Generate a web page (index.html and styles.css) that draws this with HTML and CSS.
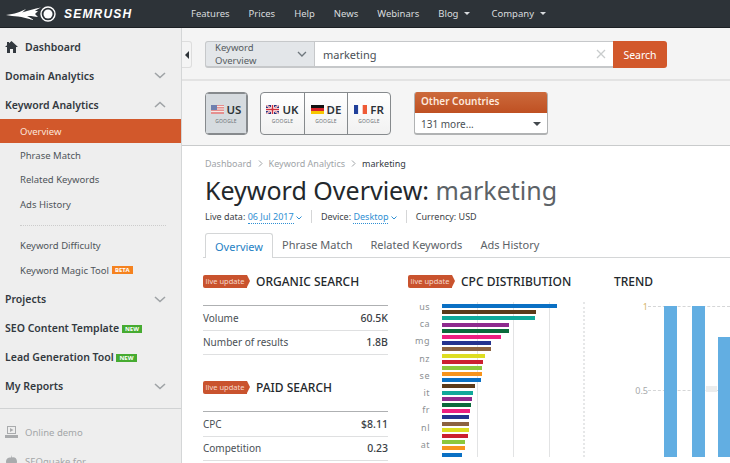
FILE: index.html
```html
<!DOCTYPE html>
<html lang="en">
<head>
    <meta charset="UTF-8">
    <meta name="viewport" content="width=device-width, initial-scale=1.0">
    <title>Keyword Overview: marketing</title>
    <link rel="stylesheet" href="styles.css">
</head>
<body>
    <header class="topbar">
        <a class="logo" href="#">
            <svg width="53" height="16" viewBox="0 0 53 16">
                <path d="M1 9 C10 8 15 6 21 3 C19 5 18 6 17 6.500 C24 4 29 3 36 1.500 C33 3 31 4 30 5 L33 5 L30 8 L33 11 C27 10 24 10 22 10 C24 11 26 12 29 14 C23 13 17 11 13 10.500 C9 10 5 10 1 9 Z" fill="#fff"/>
                <circle cx="43" cy="8" r="7" fill="none" stroke="#fff" stroke-width="1.400"/>
                <circle cx="43" cy="8" r="4.500" fill="#fff"/>
            </svg>
            <span class="logo-text">SEMRUSH</span>
        </a>
        <nav class="topnav">
            <a href="#">Features</a>
            <a href="#">Prices</a>
            <a href="#">Help</a>
            <a href="#">News</a>
            <a href="#">Webinars</a>
            <a href="#" class="has-caret">Blog</a>
            <a href="#" class="has-caret">Company</a>
        </nav>
    </header>

    <div class="app">
        <aside class="sidebar">
            <a class="side-main side-dash" href="#">
                <svg class="home" width="13" height="12" viewBox="0 0 13 12"><path d="M6.500 0 L13 6 L11 6 L11 12 L8 12 L8 8 L5 8 L5 12 L2 12 L2 6 L0 6 L2 4.200 L2 1 L4 1 L4 2.300 Z" fill="#33393f"/></svg>
                Dashboard
            </a>
            <a class="side-main" href="#">Domain Analytics <svg class="chev" width="12" height="7" viewBox="0 0 12 7"><path d="M1 1 L6 5.500 L11 1" /></svg></a>
            <a class="side-main side-open" href="#">Keyword Analytics <svg class="chev" width="12" height="7" viewBox="0 0 12 7"><path d="M1 6 L6 1.500 L11 6" /></svg></a>
            <a class="side-sub active" href="#">Overview</a>
            <a class="side-sub" href="#">Phrase Match</a>
            <a class="side-sub" href="#">Related Keywords</a>
            <a class="side-sub" href="#">Ads History</a>
            <div class="side-divider"></div>
            <a class="side-sub" href="#">Keyword Difficulty</a>
            <a class="side-sub" href="#">Keyword Magic Tool <span class="tag tag-beta">BETA</span></a>
            <a class="side-main side-after" href="#">Projects <svg class="chev" width="12" height="7" viewBox="0 0 12 7"><path d="M1 1 L6 5.500 L11 1" /></svg></a>
            <a class="side-main" href="#"><span>SEO Content Template <span class="tag tag-new">NEW</span></span></a>
            <a class="side-main" href="#"><span>Lead Generation Tool <span class="tag tag-new">NEW</span></span></a>
            <a class="side-main" href="#">My Reports <svg class="chev" width="12" height="7" viewBox="0 0 12 7"><path d="M1 1 L6 5.500 L11 1" /></svg></a>
            <div class="side-bottom">
                <a class="side-extra" href="#">
                    <svg width="13" height="12" viewBox="0 0 13 12"><path d="M2 0 H11 V8 H2 Z M3 1 V7 H10 V1 Z" fill="#a9abad"/><path d="M5 2 L8.500 4 L5 6 Z" fill="#a9abad"/><path d="M0 9 H13 V12 H0 Z" fill="#a9abad"/></svg>
                    Online demo
                </a>
                <a class="side-extra" href="#">
                    <svg width="13" height="12" viewBox="0 0 13 12"><path d="M7 0 L7 2.500 C9 1.500 12 3 12 6.500 C12 9.500 10 12 8.500 12 L4.500 12 C3 12 1 9.500 1 6.500 C1 4 3 2.500 5 2.500 C5.500 2.500 6 2.700 6 2.700 Z" fill="#a9abad"/></svg>
                    SEOquake for
                </a>
            </div>
        </aside>

        <main class="main">
            <a class="collapse" href="#"><span class="collapse-arrow"></span></a>

            <section class="search-band">
                <form class="search">
                    <div class="search-type">Keyword Overview <svg width="10" height="6" viewBox="0 0 10 6"><path d="M1 1 L5 5 L9 1" fill="none" stroke="#6f777d" stroke-width="1.300"/></svg></div>
                    <div class="search-input">
                        <span>marketing</span>
                        <svg width="10" height="10" viewBox="0 0 10 10"><path d="M1 1 L9 9 M9 1 L1 9" stroke="#c9cccd" stroke-width="1.300"/></svg>
                    </div>
                    <button class="search-btn" type="button">Search</button>
                </form>
            </section>

            <section class="country-band">
                <div class="db-group">
                    <a class="db db-selected" href="#">
                        <span class="db-top">
                            <svg class="flag" width="13" height="9" viewBox="0 0 13 9"><rect width="13" height="9" fill="#e58f8f"/><path d="M0 1.500 H13 M0 4 H13 M0 6.500 H13" stroke="#f3e9e6" stroke-width="1"/><rect width="6" height="5" fill="#6f7faf"/></svg>
                            US
                        </span>
                        <span class="db-sub">GOOGLE</span>
                    </a>
                </div>
                <div class="db-group">
                    <a class="db" href="#">
                        <span class="db-top">
                            <svg class="flag" width="13" height="9" viewBox="0 0 13 9"><rect width="13" height="9" fill="#27337f"/><path d="M0 0 L13 9 M13 0 L0 9" stroke="#fff" stroke-width="1.800"/><path d="M0 0 L13 9 M13 0 L0 9" stroke="#d2303c" stroke-width="0.600"/><path d="M6.500 0 V9 M0 4.500 H13" stroke="#fff" stroke-width="3"/><path d="M6.500 0 V9 M0 4.500 H13" stroke="#d2303c" stroke-width="1.500"/></svg>
                            UK
                        </span>
                        <span class="db-sub">GOOGLE</span>
                    </a>
                    <a class="db" href="#">
                        <span class="db-top">
                            <svg class="flag" width="13" height="9" viewBox="0 0 13 9"><rect width="13" height="3" fill="#111"/><rect y="3" width="13" height="3" fill="#d8232a"/><rect y="6" width="13" height="3" fill="#f7c600"/></svg>
                            DE
                        </span>
                        <span class="db-sub">GOOGLE</span>
                    </a>
                    <a class="db" href="#">
                        <span class="db-top">
                            <svg class="flag" width="13" height="9" viewBox="0 0 13 9"><rect width="4.300" height="9" fill="#21409a"/><rect x="4.300" width="4.400" height="9" fill="#fff"/><rect x="8.700" width="4.300" height="9" fill="#ee5a36"/></svg>
                            FR
                        </span>
                        <span class="db-sub">GOOGLE</span>
                    </a>
                </div>
                <div class="other">
                    <div class="other-head">Other Countries</div>
                    <div class="other-body">131 more... <span class="other-caret"></span></div>
                </div>
            </section>

            <section class="content">
                <div class="breadcrumb">
                    <a href="#">Dashboard</a>
                    <svg width="5" height="7" viewBox="0 0 5 7"><path d="M1 0.500 L4 3.500 L1 6.500" fill="none" stroke="#9ea3a6"/></svg>
                    <a href="#">Keyword Analytics</a>
                    <svg width="5" height="7" viewBox="0 0 5 7"><path d="M1 0.500 L4 3.500 L1 6.500" fill="none" stroke="#9ea3a6"/></svg>
                    <span>marketing</span>
                </div>
                <h1 class="title">Keyword Overview: <span>marketing</span></h1>
                <div class="meta">
                    <span class="meta-item">Live data: <a href="#">06 Jul 2017</a> <svg width="6" height="4" viewBox="0 0 6 4"><path d="M0.500 0.500 L3 3 L5.500 0.500" fill="none" stroke="#2f8fd3"/></svg></span>
                    <span class="meta-item">Device: <a href="#">Desktop</a> <svg width="6" height="4" viewBox="0 0 6 4"><path d="M0.500 0.500 L3 3 L5.500 0.500" fill="none" stroke="#2f8fd3"/></svg></span>
                    <span class="meta-item">Currency: USD</span>
                </div>
                <div class="tabs">
                    <a class="tab active" href="#">Overview</a>
                    <a class="tab" href="#">Phrase Match</a>
                    <a class="tab" href="#">Related Keywords</a>
                    <a class="tab" href="#">Ads History</a>
                </div>

                <div class="widgets">
                    <div class="col-stats">
                        <h2 class="widget-title"><span class="live">live update</span> ORGANIC SEARCH</h2>
                        <div class="stats">
                            <div class="stat"><span>Volume</span><b>60.5K</b></div>
                            <div class="stat"><span>Number of results</span><b>1.8B</b></div>
                        </div>
                        <h2 class="widget-title paid"><span class="live">live update</span> PAID SEARCH</h2>
                        <div class="stats">
                            <div class="stat"><span>CPC</span><b>$8.11</b></div>
                            <div class="stat"><span>Competition</span><b>0.23</b></div>
                        </div>
                    </div>

                    <div class="col-cpc">
                        <h2 class="widget-title"><span class="live">live update</span> CPC DISTRIBUTION</h2>
                        <div class="cpc-chart">
                            <div class="cpc-labels">
                                <span>us</span><span>ca</span><span>mg</span><span>nz</span><span>se</span><span>it</span><span>fr</span><span>nl</span><span>at</span>
                            </div>
                            <div class="cpc-bars">
                                <i class="c1" style="width: 115px"></i>
                                <i class="c2" style="width: 94px"></i>
                                <i class="c3" style="width: 93px"></i>
                                <i class="c4" style="width: 67px"></i>
                                <i class="c5" style="width: 67px"></i>
                                <i class="c6" style="width: 59px"></i>
                                <i class="c7" style="width: 49px"></i>
                                <i class="c8" style="width: 49px"></i>
                                <i class="c9" style="width: 43px"></i>
                                <i class="c10" style="width: 41px"></i>
                                <i class="c11" style="width: 40px"></i>
                                <i class="c12" style="width: 40px"></i>
                                <i class="c1" style="width: 39px"></i>
                                <i class="c2" style="width: 33px"></i>
                                <i class="c3" style="width: 31px"></i>
                                <i class="c4" style="width: 30px"></i>
                                <i class="c5" style="width: 29px"></i>
                                <i class="c6" style="width: 28px"></i>
                                <i class="c7" style="width: 27px"></i>
                                <i class="c8" style="width: 27px"></i>
                                <i class="c9" style="width: 27px"></i>
                                <i class="c10" style="width: 26px"></i>
                                <i class="c11" style="width: 23px"></i>
                                <i class="c12" style="width: 23px"></i>
                                <i class="c1" style="width: 20px"></i>
                            </div>
                        </div>
                    </div>

                    <div class="col-trend">
                        <h2 class="widget-title">TREND</h2>
                        <div class="trend-chart">
                            <span class="trend-tick tick-1">1</span>
                            <span class="trend-tick tick-05">0.5</span>
                            <span class="trend-line line-1"></span>
                            <span class="trend-line line-05"></span>
                            <span class="trend-bar bar-a"></span>
                            <span class="trend-bar bar-b"></span>
                            <span class="trend-bar bar-c"></span>
                            <span class="trend-note"></span>
                        </div>
                    </div>
                </div>
            </section>
        </main>
    </div>
</body>
</html>
```

FILE: styles.css
```css
* {
    box-sizing: border-box;
}
html, body {
    height: 100%;
}
body {
    margin: 0;
    height: 463px;
    overflow: hidden;
    background: #fff;
    color: #33393f;
    font-family: "Noto Sans", "Open Sans", sans-serif;
    font-size: 10px;
}
a {
    color: inherit;
    text-decoration: none;
}

/* top bar */
.topbar {
    height: 28px;
    background: #2d3338;
    border-bottom: 1px solid #1c2024;
    display: flex;
    align-items: center;
}
.logo {
    width: 191px;
    padding-left: 5px;
    display: flex;
    align-items: center;
    gap: 6px;
}
.logo-text {
    color: #fff;
    font-family: "Liberation Sans", sans-serif;
    font-style: italic;
    font-weight: 700;
    font-size: 12px;
    letter-spacing: 1.2px;
}
.topnav {
    display: flex;
    color: #d9dcde;
    font-size: 9.5px;
}
.topnav a {
    margin-right: 19px;
}
.topnav .has-caret {
    margin-right: 21px;
    display: flex;
    align-items: center;
    gap: 6px;
}
.topnav .has-caret:after {
    content: "";
    border-left: 3px solid transparent;
    border-right: 3px solid transparent;
    border-top: 3px solid #d9dcde;
}

.app {
    display: flex;
    height: 435px;
}

/* sidebar */
.sidebar {
    width: 182px;
    flex: none;
    background: #eee;
    border-right: 1px solid #d4d6d7;
    overflow: hidden;
    padding-top: 4px;
}
.side-main {
    height: 29px;
    padding: 0 15px 0 5px;
    display: flex;
    align-items: center;
    justify-content: space-between;
    font-size: 10.500px;
    font-weight: 600;
    color: #33393f;
}
.side-dash {
    justify-content: flex-start;
    gap: 7px;
    height: 29px;
    padding-top: 1px;
}
.side-open {
    margin-bottom: 0;
}
.side-after {
    margin-top: 2px;
}
.chev {
    fill: none;
    stroke: #9fa3a6;
    stroke-width: 1.600;
}
.side-sub {
    height: 24.500px;
    padding-left: 20px;
    display: flex;
    align-items: center;
    gap: 3px;
    font-size: 9.500px;
    color: #4f555a;
}
.side-sub.active {
    height: 24px;
    background: #d2582b;
    color: #fbe6dc;
}
.side-divider {
    height: 1px;
    margin: 8px 15px 8px 20px;
    border-top: 1px dotted #ccc;
}
.tag {
    display: inline-block;
    font-size: 6px;
    line-height: 8px;
    font-weight: 700;
    padding: 0 3px;
    color: #fff;
    vertical-align: 1px;
}
.tag-beta {
    background: #f5821f;
}
.tag-new {
    background: #46ab31;
}
.side-bottom {
    border-top: 1px solid #d0d2d3;
    margin-top: 7px;
    padding-top: 9px;
}
.side-extra {
    height: 29px;
    padding-left: 5px;
    display: flex;
    align-items: center;
    gap: 7px;
    font-size: 9.500px;
    color: #a3a6a8;
}

/* main column */
.main {
    flex: 1;
    min-width: 0;
    position: relative;
}
.collapse {
    position: absolute;
    left: 0;
    top: 13px;
    width: 10px;
    height: 27px;
    background: #f4f4f4;
    border: 1px solid #ddd;
    border-left: 0;
    border-radius: 0 3px 3px 0;
    display: flex;
    align-items: center;
    justify-content: center;
}
.collapse-arrow {
    border-top: 4px solid transparent;
    border-bottom: 4px solid transparent;
    border-right: 4px solid #2d3338;
}
.search-band {
    height: 53px;
    background: #f4f4f4;
    border-bottom: 2px solid #e3e3e3;
    padding: 13px 0 0 23px;
}
.search {
    display: flex;
    width: 462px;
    height: 27px;
}
.search-type {
    width: 110px;
    background: #e3e6e9;
    border: 1px solid #c6c8ca;
    border-bottom-width: 2px;
    border-radius: 3px 0 0 3px;
    display: flex;
    align-items: center;
    justify-content: space-between;
    padding: 0 7px 0 9px;
    font-size: 9.500px;
    color: #565c61;
}
.search-input {
    flex: 1;
    background: #fff;
    border-top: 1px solid #c6c8ca;
    border-bottom: 2px solid #c6c8ca;
    display: flex;
    align-items: center;
    justify-content: space-between;
    padding: 0 7px 0 8px;
    font-size: 11px;
    color: #4a5055;
}
.search-btn {
    width: 54px;
    border: 0;
    border-radius: 0 3px 3px 0;
    background: #d2582b;
    color: #fff;
    font-family: inherit;
    font-size: 10.500px;
    padding: 0;
}

/* database buttons */
.country-band {
    height: 65px;
    background: #f5f5f5;
    border-bottom: 1px solid #c9cbcc;
    padding: 11px 0 0 23px;
    display: flex;
    align-items: flex-start;
}
.db-group {
    display: flex;
    height: 43px;
    margin-right: 12px;
    border: 1px solid #868a8d;
    border-radius: 4px;
    overflow: hidden;
    background: linear-gradient(#fff, #f1f1f1);
}
.db {
    width: 43px;
    display: flex;
    flex-direction: column;
    align-items: center;
    justify-content: center;
    border-left: 1px solid #868a8d;
}
.db:first-child {
    border-left: 0;
}
.db-selected {
    background: #d6dbdf;
    border: 1px solid #868a8d;
    width: 41px;
}
.db-top {
    display: flex;
    align-items: center;
    gap: 3px;
    font-size: 11.500px;
    line-height: 14px;
    font-weight: 600;
    color: #2d3338;
}
.db-sub {
    font-size: 5px;
    line-height: 8px;
    letter-spacing: 0.2px;
    color: #6e7377;
}
.other {
    width: 134px;
    height: 43px;
    margin-left: 11px;
    border-radius: 3px;
    border: 1px solid #b0b2b3;
    border-top: 0;
    border-bottom-width: 2px;
    overflow: hidden;
    background: #fff;
}
.other-head {
    height: 21px;
    background: linear-gradient(#cc6a3c, #bf5022);
    color: #fde9dd;
    font-size: 10px;
    font-weight: 600;
    padding: 2px 0 0 6px;
}
.other-body {
    height: 21px;
    display: flex;
    align-items: center;
    justify-content: space-between;
    padding: 0 6px 0 6px;
    font-size: 10px;
    color: #4a5055;
}
.other-caret {
    border-left: 4px solid transparent;
    border-right: 4px solid transparent;
    border-top: 4px solid #44494e;
}

/* page content */
.content {
    padding: 10px 0 0 21px;
}
.breadcrumb {
    display: flex;
    align-items: center;
    gap: 6px;
    padding-left: 2px;
    height: 14px;
    font-size: 9px;
    color: #a0a4a7;
}
.breadcrumb span {
    color: #33393f;
}
.title {
    margin: 4px 0 0 2px;
    font-size: 25px;
    line-height: 32px;
    font-weight: 400;
    color: #23282c;
}
.title span {
    color: #5c6267;
}
.meta {
    display: flex;
    align-items: center;
    height: 15px;
    margin: 3px 0 0 2px;
    font-size: 9px;
    color: #3c4247;
}
.meta-item {
    padding-right: 9px;
    margin-right: 9px;
    border-right: 1px solid #d5d6d7;
}
.meta-item:last-child {
    border-right: 0;
}
.meta a {
    color: #2f8fd3;
    border-bottom: 1px dotted #2f8fd3;
}
.tabs {
    display: flex;
    align-items: flex-end;
    height: 25px;
    margin-top: 9px;
    padding-left: 2px;
    border-bottom: 1px solid #d4d6d7;
}
.tab {
    height: 25px;
    padding: 5px 9px 0;
    margin-right: 0;
    font-size: 11px;
    line-height: 15px;
    color: #5c6267;
}
.tab.active {
    height: 25px;
    color: #1f7fc4;
    background: #fff;
    border: 1px solid #d4d6d7;
    border-bottom: 0;
    border-radius: 3px 3px 0 0;
    margin-bottom: -1px;
}

.widgets {
    display: flex;
    padding-top: 14px;
}
.widget-title {
    display: flex;
    align-items: center;
    gap: 6px;
    height: 18px;
    margin: 0;
    font-size: 12px;
    font-weight: 500;
    color: #23282c;
}
.live {
    position: relative;
    display: block;
    width: 44px;
    height: 13px;
    margin-right: 3px;
    background: #c9532e;
    border-radius: 2px 0 0 2px;
    color: #f6d8cb;
    font-size: 7.500px;
    line-height: 13px;
    font-weight: 400;
    text-align: center;
}
.live:after {
    content: "";
    position: absolute;
    left: 100%;
    top: 0;
    border-left: 3px solid #c9532e;
    border-top: 6.500px solid transparent;
    border-bottom: 6.500px solid transparent;
}

/* stats column */
.col-stats {
    width: 185px;
    margin-right: 20px;
}
.stats {
    margin-top: 15px;
    border-top: 1px solid #aeb0b2;
}
.stat {
    height: 24.500px;
    display: flex;
    align-items: center;
    justify-content: space-between;
    border-bottom: 1px solid #dfe0e1;
    font-size: 10px;
    color: #4a5055;
}
.stat b {
    font-size: 10.500px;
    font-weight: 500;
    color: #3a4045;
}
.paid {
    margin-top: 23px;
}

/* cpc chart */
.col-cpc {
    width: 177px;
    margin-right: 29px;
}
.cpc-chart {
    display: flex;
    height: 155px;
    margin-top: 12px;
    overflow: hidden;
}
.cpc-labels {
    width: 34px;
    display: flex;
    flex-direction: column;
    align-items: flex-end;
    padding-top: 0;
    flex: none;
}
.cpc-labels span {
    height: 18.600px;
    line-height: 9px;
    font-size: 9px;
    color: #8c9093;
    letter-spacing: 0.5px;
    padding-right: 12px;
    width: 34px;
    text-align: right;
}
.cpc-bars {
    flex: 1;
    display: flex;
    flex-direction: column;
    gap: 2.200px;
    padding-top: 2px;
    background:
        repeating-linear-gradient(to right, transparent 0, transparent 35px, #e2e3e4 35px, #e2e3e4 36px);
    border-right: 2px dotted #e6e7e8;
}
.cpc-bars i {
    display: block;
    height: 4px;
    flex: none;
}
.c1 { background: #0a70c4; }
.c2 { background: #5b3a1a; }
.c3 { background: #10a89a; }
.c4 { background: #8e2a8e; }
.c5 { background: #0c6a3c; }
.c6 { background: #ee1f80; }
.c7 { background: #25338f; }
.c8 { background: #8c6240; }
.c9 { background: #dddd22; }
.c10 { background: #cc2030; }
.c11 { background: #8cc83c; }
.c12 { background: #f7941d; }

/* trend chart */
.col-trend {
    flex: 1;
    min-width: 0;
}
.trend-chart {
    position: relative;
    height: 155px;
    margin-top: 12px;
    overflow: hidden;
}
.trend-tick {
    position: absolute;
    right: 82px;
    font-size: 9px;
    line-height: 10px;
    color: #a6a9ab;
}
.tick-1 {
    top: 0;
    color: #d7b56a;
}
.tick-05 {
    top: 84px;
}
.trend-line {
    position: absolute;
    left: 34px;
    right: 0;
    border-top: 1px dashed #d5d6d7;
}
.line-1 {
    top: 4px;
}
.line-05 {
    top: 88px;
}
.trend-bar {
    position: absolute;
    bottom: 0;
    width: 13px;
    background: #62aee2;
}
.bar-a {
    left: 50px;
    top: 4px;
}
.bar-b {
    left: 78px;
    top: 4px;
}
.bar-c {
    left: 104px;
    top: 35px;
    width: 14px;
}
.trend-note {
    position: absolute;
    left: 92px;
    top: 84px;
    width: 11px;
    height: 6px;
    background: #eceded;
}
```
